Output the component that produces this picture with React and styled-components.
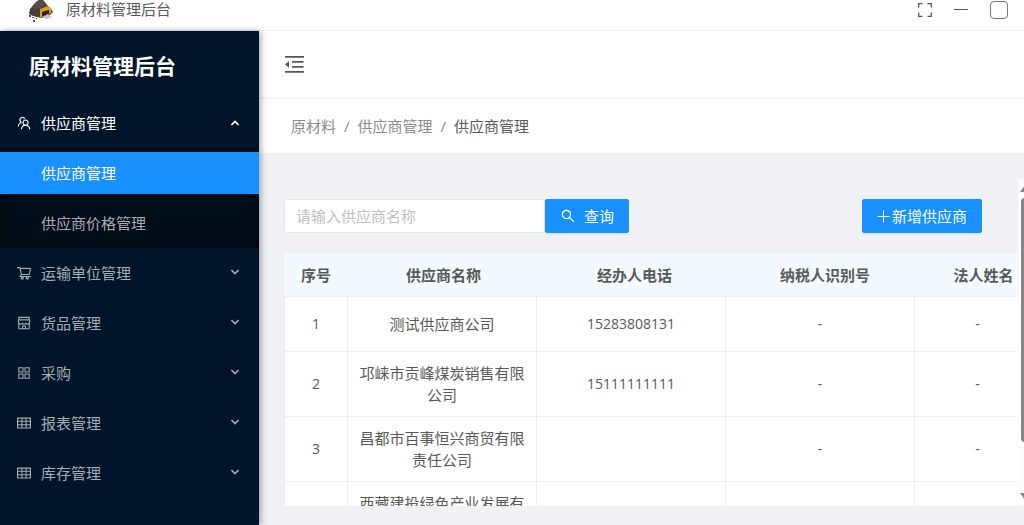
import React from 'react';
import styled, { createGlobalStyle } from 'styled-components';
import {
  AiOutlineTeam,
  AiOutlineShoppingCart,
  AiOutlineShop,
  AiOutlineAppstore,
  AiOutlineTable,
  AiOutlineSearch,
} from 'react-icons/ai';

const menuGroups = [
  { title: '运输单位管理', Icon: AiOutlineShoppingCart },
  { title: '货品管理', Icon: AiOutlineShop },
  { title: '采购', Icon: AiOutlineAppstore },
  { title: '报表管理', Icon: AiOutlineTable },
  { title: '库存管理', Icon: AiOutlineTable },
];

const columns = ['序号', '供应商名称', '经办人电话', '纳税人识别号', '法人姓名'];
const headWidths = [64, 191, 191, 190, 127];
const bodyWidths = [63, 189, 189, 189, 126];

const suppliers = [
  { id: '1', name: '测试供应商公司', phone: '15283808131', taxNo: '-', legal: '-' },
  { id: '2', name: '邛崃市贡峰煤炭销售有限公司', phone: '15111111111', taxNo: '-', legal: '-' },
  { id: '3', name: '昌都市百事恒兴商贸有限责任公司', phone: '', taxNo: '-', legal: '-' },
  { id: '4', name: '西藏建投绿色产业发展有限公司', phone: '', taxNo: '-', legal: '-' },
];

function Logo () {
  return (
    <svg width="26" height="24" viewBox="0 0 26 24" aria-hidden="true">
      <path d="M1 14 L2 9 L8 2 L11 0 H15 L20 6 L23 9 L25 12 L21 16 L13 18 L5 16 Z" fill="#45403b" />
      <path d="M8 2 L11 0 H15 L18 4 L12 8 L6 9 Z" fill="#544e47" />
      <path d="M12 9 L20 6 L23 8 V13 L21 14 V10 L14 12 V18 L12 17 Z" fill="#e59a1c" />
      <path d="M14 12 L21 10 V14 L14 17 Z" fill="#2b2623" />
      <path d="M14 17 L20 14 L24 17 L18 19 Z" fill="#c4c3c1" />
      <path d="M1 15h2v2H1z M4 17h2v1H4z M5 20h2v2H5z M8 18h1v1H8z" fill="#4b4b4f" />
    </svg>
  );
}

function FoldIcon () {
  return (
    <svg width="19" height="17" viewBox="0 0 19 17" fill="#555" aria-hidden="true">
      <path d="M0 0h19v1.8H0z M7 5h11.5v1.8H7z M7 10h11.5v1.8H7z M0 15h19v1.8H0z M4 5v6.8L0 8.4z" />
    </svg>
  );
}

function Chevron ({ up }) {
  return (
    <svg width="10" height="10" viewBox="0 0 10 10" fill="none" stroke="currentColor" strokeWidth="1.6" aria-hidden="true">
      <path d={up ? 'M1.4 7 L5 3.4 L8.6 7' : 'M1.4 2 L5 5.6 L8.6 2'} />
    </svg>
  );
}

export default function App () {
  return (
    <Page>
      <GlobalStyle />
      <TitleBar>
        <Logo />
        <AppName>原材料管理后台</AppName>
        <WindowButtons>
          <WindowButton aria-label="全屏">
            <svg width="14" height="14" viewBox="0 0 14 14" fill="none" stroke="#555" strokeWidth="1.3">
              <path d="M0.7 4.5V0.7H4.5 M9.5 0.7H13.3V4.5 M13.3 9.5V13.3H9.5 M4.5 13.3H0.7V9.5" />
            </svg>
          </WindowButton>
          <WindowButton aria-label="最小化">
            <svg width="14" height="14" viewBox="0 0 14 14" stroke="#555" strokeWidth="1">
              <path d="M0 6.5H14" />
            </svg>
          </WindowButton>
          <WindowButton aria-label="最大化">
            <svg width="18" height="18" viewBox="0 0 18 18" fill="none" stroke="#777" strokeWidth="1">
              <rect x="0.5" y="0.5" width="17" height="17" rx="3.5" />
            </svg>
          </WindowButton>
        </WindowButtons>
      </TitleBar>

      <Body>
        <Sidebar>
          <Brand>原材料管理后台</Brand>
          <MenuTitle $open aria-expanded="true">
            <AiOutlineTeam size={16} />
            <MenuLabel>供应商管理</MenuLabel>
            <Chevron up />
          </MenuTitle>
          <SubMenu>
            <SubItem href="#suppliers" $active>供应商管理</SubItem>
            <SubItem href="#prices">供应商价格管理</SubItem>
          </SubMenu>
          {menuGroups.map(({ title, Icon }) => (
            <MenuTitle key={title} aria-expanded="false">
              <Icon size={16} />
              <MenuLabel>{title}</MenuLabel>
              <Chevron />
            </MenuTitle>
          ))}
        </Sidebar>

        <Main>
          <Header>
            <FoldButton aria-label="收起菜单">
              <FoldIcon />
            </FoldButton>
          </Header>
          <Breadcrumb aria-label="面包屑">
            <Crumb href="#materials">原材料</Crumb>
            <Slash>/</Slash>
            <Crumb href="#supplier">供应商管理</Crumb>
            <Slash>/</Slash>
            <CurrentCrumb>供应商管理</CurrentCrumb>
          </Breadcrumb>

          <ScrollArea>
            <Content>
              <Toolbar>
                <SearchGroup>
                  <SearchInput placeholder="请输入供应商名称" aria-label="供应商名称" />
                  <PrimaryButton $gap="8px">
                    <AiOutlineSearch size={16} />
                    查询
                  </PrimaryButton>
                </SearchGroup>
                <PrimaryButton $gap="2px">
                  <svg width="13" height="13" viewBox="0 0 13 13" stroke="currentColor" strokeWidth="1" aria-hidden="true">
                    <path d="M6.5 0.5V12.5 M0.5 6.5H12.5" />
                  </svg>
                  新增供应商
                </PrimaryButton>
              </Toolbar>

              <HeadTable>
                <colgroup>
                  {headWidths.map((w, i) => <Col key={columns[i]} $w={w} />)}
                </colgroup>
                <thead>
                  <tr>
                    {columns.map((c) => <Th key={c} scope="col">{c}</Th>)}
                  </tr>
                </thead>
              </HeadTable>
              <BodyTable aria-label="供应商列表">
                <colgroup>
                  {bodyWidths.map((w, i) => <Col key={columns[i]} $w={w} />)}
                </colgroup>
                <tbody>
                  {suppliers.map((s) => (
                    <tr key={s.id}>
                      <Td $numeric>{s.id}</Td>
                      <Td>{s.name}</Td>
                      <Td $numeric>{s.phone}</Td>
                      <Td $numeric>{s.taxNo}</Td>
                      <Td $numeric>{s.legal}</Td>
                    </tr>
                  ))}
                </tbody>
              </BodyTable>
            </Content>
            <ScrollTrack aria-hidden="true">
              <svg width="12" height="7" viewBox="0 0 12 7"><path d="M6 0 L11 7 H1 Z" fill="#868686" /></svg>
              <ScrollThumb />
              <svg width="12" height="7" viewBox="0 0 12 7"><path d="M6 7 L11 0 H1 Z" fill="#868686" /></svg>
            </ScrollTrack>
          </ScrollArea>
        </Main>
      </Body>
    </Page>
  );
}

const GlobalStyle = createGlobalStyle`
  * {
    box-sizing: border-box;
  }

  body {
    margin: 0;
    color: #595959;
    font-family: "Open Sans", "Noto Sans CJK SC", sans-serif;
    font-size: 15px;
    line-height: 22px;
  }

  button,
  input {
    font: inherit;
  }

  button {
    cursor: pointer;
  }
`;

const Page = styled.div`
  display: flex;
  flex-direction: column;
  height: 100vh;
  overflow: hidden;
  background: #f0f1f5;
`;

const TitleBar = styled.header`
  display: flex;
  flex: none;
  align-items: flex-start;
  height: 31px;
  padding: 0 16px 0 28px;
  border-bottom: 1px solid #eef0f3;
  background: #fff;
`;

const AppName = styled.span`
  flex: 1;
  margin-left: 12px;
  line-height: 18px;
`;

const WindowButtons = styled.div`
  display: flex;
  align-items: center;
  gap: 22px;
  height: 20px;
`;

const WindowButton = styled.button`
  display: flex;
  padding: 0;
  border: 0;
  background: none;
`;

const Body = styled.div`
  display: flex;
  flex: 1;
  min-height: 0;
`;

const Sidebar = styled.nav`
  position: relative;
  z-index: 1;
  flex: none;
  width: 259px;
  background: #001529;
  box-shadow: 2px 0 6px rgba(0, 21, 41, 0.35);
`;

const Brand = styled.h1`
  height: 67px;
  margin: 0;
  padding-left: 29px;
  color: #fff;
  font-size: 21px;
  font-weight: 700;
  line-height: 70px;
`;

const MenuTitle = styled.button`
  display: flex;
  align-items: center;
  width: 100%;
  height: 50px;
  padding: 0 19px 0 16px;
  border: 0;
  background: none;
  color: ${({ $open }) => ($open ? '#fff' : '#a6adb4')};
  text-align: left;
`;

const MenuLabel = styled.span`
  flex: 1;
  margin-left: 9px;
`;

const SubMenu = styled.div`
  display: flex;
  flex-direction: column;
  gap: 8px;
  padding: 4px 0;
  background: #000c17;
  box-shadow: inset 0 2px 8px rgba(0, 0, 0, 0.45);
`;

const SubItem = styled.a`
  height: 42px;
  padding-left: 41px;
  background: ${({ $active }) => ($active ? '#1890ff' : 'transparent')};
  color: ${({ $active }) => ($active ? '#fff' : '#a6adb4')};
  line-height: 42px;
  text-decoration: none;
`;

const Main = styled.main`
  display: flex;
  flex: 1;
  flex-direction: column;
  min-width: 0;
`;

const Header = styled.div`
  display: flex;
  flex: none;
  align-items: center;
  height: 68px;
  padding-left: 26px;
  border-bottom: 2px solid #f5f5f6;
  background: #fff;
`;

const FoldButton = styled.button`
  display: flex;
  padding: 0;
  border: 0;
  background: none;
`;

const Breadcrumb = styled.nav`
  display: flex;
  flex: none;
  align-items: center;
  height: 54px;
  padding-left: 32px;
  background: #fff;
`;

const Crumb = styled.a`
  color: #8c8c8c;
  text-decoration: none;
`;

const Slash = styled.span`
  margin: 0 8px;
  color: #8c8c8c;
`;

const CurrentCrumb = styled.span`
  color: #595959;
`;

const ScrollArea = styled.section`
  display: flex;
  flex: 1;
  min-height: 0;
  margin: 26px 0 19px 25px;
  overflow: hidden;
`;

const Content = styled.div`
  flex: 1;
  min-width: 0;
  overflow: hidden;
`;

const Toolbar = styled.div`
  display: flex;
  justify-content: space-between;
  padding: 20px 36px 20px 0;
`;

const SearchGroup = styled.div`
  display: flex;
`;

const SearchInput = styled.input`
  width: 261px;
  height: 34px;
  padding: 0 11px;
  border: 1px solid #e3e4e8;
  border-radius: 2px 0 0 2px;
  background: #fff;
  color: #595959;

  &::placeholder {
    color: #bfbfbf;
    opacity: 1;
  }
`;

const PrimaryButton = styled.button`
  display: flex;
  align-items: center;
  gap: ${({ $gap }) => $gap};
  height: 34px;
  padding: 0 14px;
  border: 1px solid #1890ff;
  border-radius: 2px;
  background: #1890ff;
  box-shadow: 0 2px 0 rgba(0, 0, 0, 0.04);
  color: #fff;
`;

const HeadTable = styled.table`
  width: 763px;
  border-collapse: collapse;
  table-layout: fixed;
  background: #f2f9ff;
`;

const BodyTable = styled.table`
  width: 756px;
  border-spacing: 0;
  table-layout: fixed;
  background: #fff;
`;

const Col = styled.col`
  width: ${({ $w }) => $w}px;
`;

const Th = styled.th`
  height: 43px;
  padding: 0;
  font-weight: 700;
`;

const Td = styled.td`
  height: 55px;
  padding: 10px 11px;
  border-top: 1px solid #efefef;
  border-left: 1px solid #efefef;
  font-size: ${({ $numeric }) => ($numeric ? '14px' : '15px')};
  text-align: center;
`;

const ScrollTrack = styled.div`
  display: flex;
  flex: none;
  flex-direction: column;
  width: 6px;
  padding: 6px 0 6px 1px;
  overflow: hidden;
  background: #fcfcfc;

  svg {
    flex: none;
  }
`;

const ScrollThumb = styled.div`
  flex: none;
  width: 8px;
  height: 244px;
  margin: 6px 0 auto 2px;
  border-radius: 4px;
  background: #868686;
`;
